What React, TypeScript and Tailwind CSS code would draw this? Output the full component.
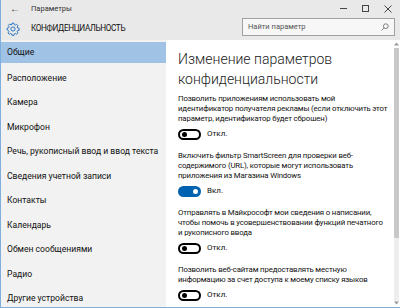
import React from "react";

const navItems = [
  "Расположение",
  "Камера",
  "Микрофон",
  "Речь, рукописный ввод и ввод текста",
  "Сведения учетной записи",
  "Контакты",
  "Календарь",
  "Обмен сообщениями",
  "Радио",
  "Другие устройства",
];

const options = [
  {
    lines: [
      "Позволить приложениям использовать мой",
      "идентификатор получателя рекламы (если отключить этот",
      "параметр, идентификатор будет сброшен)",
    ],
    on: false,
  },
  {
    lines: [
      "Включить фильтр SmartScreen для проверки веб-",
      "содержимого (URL), которые могут использовать",
      "приложения из Магазина Windows",
    ],
    on: true,
  },
  {
    lines: [
      "Отправлять в Майкрософт мои сведения о написании,",
      "чтобы помочь в усовершенствовании функций печатного",
      "и рукописного ввода",
    ],
    on: false,
  },
  {
    lines: [
      "Позволить веб-сайтам предоставлять местную",
      "информацию за счет доступа к моему списку языков",
    ],
    on: false,
  },
];

function Toggle({ on }: { on: boolean }) {
  return (
    <div className="flex items-center gap-[6px] h-[12px]">
      {on ? (
        <div className="w-[23px] h-[11px] rounded-full bg-[#0063b1] flex items-center justify-end pr-[3px]">
          <div className="w-[5px] h-[5px] rounded-full bg-white" />
        </div>
      ) : (
        <div className="w-[23px] h-[11px] rounded-full border-[2px] border-black flex items-center pl-[2px]">
          <div className="w-[5px] h-[5px] rounded-full bg-black" />
        </div>
      )}
      <span className="text-[8px] text-[#111]">{on ? "Вкл." : "Откл."}</span>
    </div>
  );
}

function Gear() {
  return (
    <svg width="14" height="14" viewBox="0 0 24 24" fill="none" stroke="#1f6fc0" strokeWidth="1.6">
      <path d="M10.3 2h3.4l.5 2.6 1.8.8 2.2-1.5 2.4 2.4-1.5 2.2.8 1.8 2.6.5v3.4l-2.6.5-.8 1.8 1.5 2.2-2.4 2.4-2.2-1.5-1.8.8-.5 2.6h-3.4l-.5-2.6-1.8-.8-2.2 1.5-2.4-2.4 1.5-2.2-.8-1.8L2 13.7v-3.4l2.6-.5.8-1.8-1.5-2.2 2.4-2.4 2.2 1.5 1.8-.8z" strokeLinejoin="round" />
      <circle cx="12" cy="12" r="3.6" />
    </svg>
  );
}

export default function App() {
  return (
    <div
      className="w-[400px] h-[308px] overflow-hidden flex flex-col bg-[#e9e9e9] border-l border-b border-[#7eaedd] text-[#111]"
      style={{ fontFamily: 'Roboto, "Noto Sans", sans-serif' }}
    >
      {/* Title bar */}
      <div className="h-[17px] flex items-center shrink-0">
        <span className="w-[30px] pl-[9px] text-[10px] text-[#333] leading-none">←</span>
        <span className="text-[7.5px] text-[#333]">Параметры</span>
        <div className="ml-auto flex items-center h-full">
          <div className="w-[22px] flex justify-center">
            <div className="w-[7px] h-px bg-[#444]" />
          </div>
          <div className="w-[22px] flex justify-center">
            <div className="w-[7px] h-[7px] border border-[#444]" />
          </div>
          <div className="w-[24px] flex justify-center">
            <svg width="8" height="8" viewBox="0 0 8 8" stroke="#444" strokeWidth="1">
              <path d="M0.5 0.5l7 7M7.5 0.5l-7 7" />
            </svg>
          </div>
        </div>
      </div>

      {/* Header */}
      <div className="h-[23px] flex items-center shrink-0">
        <div className="w-[30px] pl-[5px] flex">
          <Gear />
        </div>
        <span className="text-[8.2px] tracking-[-0.35px]">КОНФИДЕНЦИАЛЬНОСТЬ</span>
        <div className="ml-auto mr-[5px] -mt-[4px] w-[153px] h-[18px] border border-[#a0a0a0] bg-[#f7f7f7] flex items-center px-[5px]">
          <span className="text-[7.5px] text-[#555]">Найти параметр</span>
          <svg className="ml-auto" width="8" height="8" viewBox="0 0 10 10" fill="none" stroke="#666" strokeWidth="1">
            <circle cx="6" cy="4" r="3" />
            <path d="M3.8 6.2L0.8 9.2" />
          </svg>
        </div>
      </div>

      {/* Main */}
      <div className="flex flex-1 min-h-0">
        <div className="w-[165px] bg-[#f2f2f2] flex flex-col shrink-0 text-[8.6px]">
          <div className="h-[21px] mt-[2px] shrink-0 flex items-center pl-[6px] bg-[#9fc2e5]">Общие</div>
          <div className="flex flex-col pt-[3px]">
            {navItems.map((item) => (
              <div key={item} className="h-[24.5px] shrink-0 flex items-center pl-[6px] whitespace-nowrap">
                {item}
              </div>
            ))}
          </div>
        </div>

        <div className="flex-1 bg-white flex min-w-0">
          <div className="flex-1 pl-[12px] pt-[10px] flex flex-col min-w-0">
            <div className="text-[14px] leading-[19.5px] text-[#1a1a1a] font-light">
              <div>Изменение параметров</div>
              <div>конфиденциальности</div>
            </div>
            <div className="flex flex-col gap-[11px] mt-[5px]">
              {options.map((opt, i) => (
                <div key={i} className="flex flex-col gap-[4px]">
                  <div className="text-[7.8px] leading-[10px] tracking-[-0.15px] text-[#111]">
                    {opt.lines.map((l) => (
                      <div key={l} className="whitespace-nowrap">
                        {l}
                      </div>
                    ))}
                  </div>
                  <Toggle on={opt.on} />
                </div>
              ))}
            </div>
          </div>
          {/* Scrollbar */}
          <div className="w-[7px] flex flex-col items-center pt-[2px] pb-[2px] shrink-0">
            <svg width="5" height="4" viewBox="0 0 5 4" fill="#999">
              <path d="M2.5 0.5L5 3.5H0z" />
            </svg>
            <div className="w-[5px] h-[190px] bg-[#c8c8c8] mt-[2px]" />
            <div className="w-[5px] flex-1 bg-[#eeeeee]" />
            <svg width="5" height="4" viewBox="0 0 5 4" fill="#999">
              <path d="M2.5 3.5L5 0.5H0z" />
            </svg>
          </div>
        </div>
      </div>
    </div>
  );
}
